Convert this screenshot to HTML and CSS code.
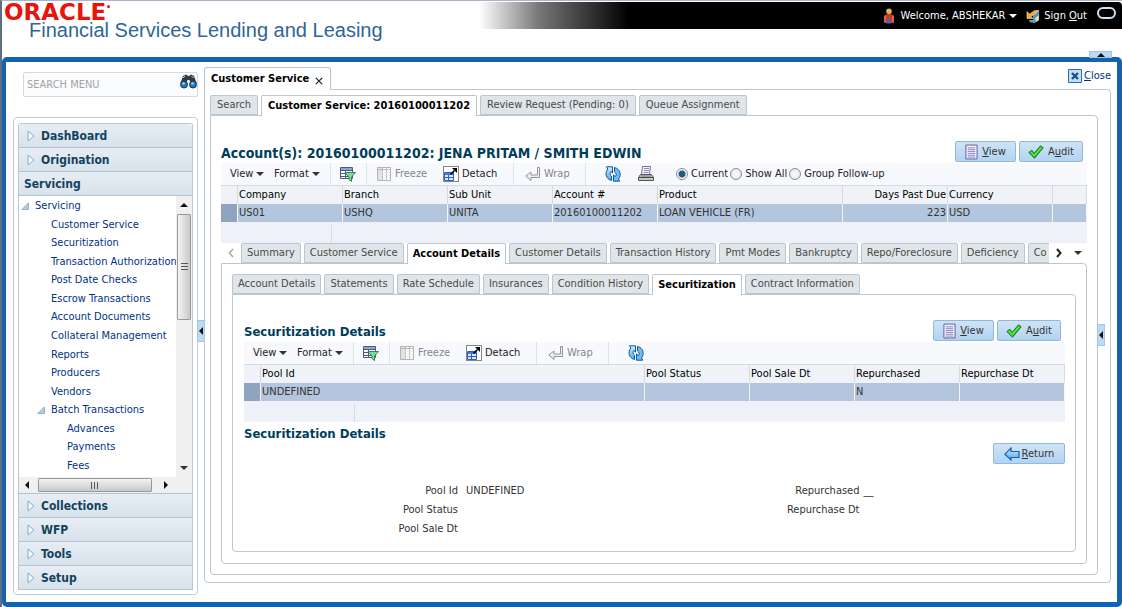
FILE: index.html
```html
<!DOCTYPE html>
<html lang="en">
<head>
<meta charset="utf-8">
<title>Financial Services Lending and Leasing</title>
<link rel="stylesheet" href="styles.css">
</head>
<body>
<svg class="sprite" aria-hidden="true">
  <defs>
    <linearGradient id="g-blue" x1="0" y1="0" x2="0" y2="1"><stop offset="0" stop-color="#d5efff"/><stop offset="1" stop-color="#4aa5ea"/></linearGradient>
    <symbol id="i-filter" viewBox="0 0 16 16">
      <path d="M.5 1.500h12v11H.5z" fill="#fff" stroke="#4b5a78"/><path d="M1 2h11v2H1z" fill="#8fa3d8"/>
      <path d="M0 4.500h12M0 7.500h12M0 10.500h8M5.500 4v8" stroke="#4b5a78"/>
      <path d="M5 6.500h10.500l-4 4.500v4.500l-2.500-2V11z" fill="#7fdc9a" stroke="#2f8a52"/>
    </symbol>
    <symbol id="i-freeze" viewBox="0 0 16 16">
      <path d="M1.500 1.500h13v13h-13z" fill="#fff" stroke="#b4b4b4"/><path d="M2 2h4v12H2z" fill="#e2e2e2"/>
      <path d="M1 3.500h14M6.500 2v13M10.500 2v13" stroke="#b9b9b9"/><path d="M2 6.500h12M2 9.500h12M2 12h12" stroke="#e6e6e6"/>
    </symbol>
    <symbol id="i-detach" viewBox="0 0 16 16">
      <path d="M.5.5h15v15H.5z" fill="#fff" stroke="#111" stroke-dasharray="1 1"/>
      <path d="M1.500 6.500h9v8h-9z" fill="#d7e8ff" stroke="#2c5fc0"/><path d="M2 7h8v2H2z" fill="#3f7be0"/><path d="M2 11.500h8M5.500 9v5" stroke="#2c5fc0"/>
      <path d="M7.500 8.500l4-4" stroke="#000" stroke-width="1.600"/><path d="M9 2h5v5z" fill="#000"/>
    </symbol>
    <symbol id="i-wrap" viewBox="0 0 16 16">
      <path d="M12.500 1.500h2v10H6v3L.8 10 6 6v3h6.500z" fill="#eee" stroke="#949494"/>
    </symbol>
    <symbol id="i-refresh" viewBox="0 0 16 16">
      <path d="M1.500.8H7.500v6.200L5.800 5.500C4.500 7 4.800 8.800 6.500 10v4.500C1 13-.5 7.500 2.800 3z" fill="url(#g-blue)" stroke="#12589f"/>
      <path d="M14.700 15.200H8.500V9l1.900 1.500c1.300-1.500 1-3.300-.9-4.500V1.500c5.800 1.500 7.200 7 4 11.500z" fill="#6bbcf7" stroke="#12589f"/>
    </symbol>
    <symbol id="i-print" viewBox="0 0 16 16">
      <path d="M4.500.5h8l-1 8h-8z" fill="#f5f3ff" stroke="#77729c"/><path d="M6 2.500h5M6 4.500h5M5.500 6.500h5" stroke="#8d86bd"/>
      <path d="M2.500 8.500h11l2 3v3H.5v-3z" fill="#c9c9c9" stroke="#555"/><path d="M1 11.500h14" stroke="#444"/><path d="M3 10h10" stroke="#777"/>
    </symbol>
    <symbol id="i-page" viewBox="0 0 14 16">
      <path d="M1 .5h12v15H1z" fill="#f2efff" stroke="#5b5791"/><path d="M3 3.500h8M3 5.500h8M3 7.500h8M3 9.500h8M3 11.500h8M3 13.500h8" stroke="#8881bc"/>
    </symbol>
    <symbol id="i-check" viewBox="0 0 16 14">
      <path d="M.8 7.500l3-2.300 2.500 3L12.500.8l2.700 2L6.500 13.200z" fill="#2fc52f" stroke="#137a1a"/><path d="M3 7.200l3.200 3.500 7-8.200" fill="none" stroke="#8df084"/>
    </symbol>
    <symbol id="i-back" viewBox="0 0 16 14">
      <path d="M7 1v3.500h8v6H7V13L1 7.200z" fill="url(#g-blue)" stroke="#1560b4" stroke-width="1.200"/>
    </symbol>
    <symbol id="i-tri" viewBox="0 0 8 12"><path d="M1 1L7 6l-6 5z" fill="#f4fbff" stroke="#83a9c6"/></symbol>
    <symbol id="i-open" viewBox="0 0 8 8"><path d="M7.500.8v6.700H.8z" fill="#a9cce3" stroke="#84a8c2" stroke-width=".8"/></symbol>
  </defs>
</svg>

<header class="top">
  <div class="brand">
    <div class="oracle">ORACLE<span class="dot"></span></div>
    <h1 class="product">Financial Services Lending and Leasing</h1>
  </div>
  <nav class="userbar">
    <svg class="ic-user" viewBox="0 0 12 16"><circle cx="6" cy="3.300" r="2.800" fill="#e9b25c"/><path d="M1 15V8.500Q1 6 6 6t5 2.500V15z" fill="#cf3a22"/><path d="M3.500 11h5v4.500h-5z" fill="#4a63b5"/><path d="M2 8v6M10 8v6" stroke="#f08a5c"/></svg>
    <button class="user" type="button">Welcome, ABSHEKAR <i class="down light"></i></button>
    <svg class="ic-out" viewBox="0 0 14 14"><path d="M7 2h6v9l-4 3H7z" fill="#4b90cf"/><path d="M9 9l4-3v5l-3 2z" fill="#e6dca0"/><path d="M1 2.500v7h6L5 7.500 10.500 4 13 1.500H9L3.500 5z" fill="#f2a437" stroke="#ffe08a" stroke-width=".6"/><path d="M3 11h5v2.500H4z" fill="#5b9fd8"/></svg>
    <a class="signout" href="#">Sign <u>O</u>ut</a>
    <span class="ring"></span>
  </nav>
</header>

<div class="frame">
  <button class="handle handle-top" type="button" aria-label="Collapse header"><i class="up"></i></button>
  <aside class="side">
    <div class="search">
      <input type="text" placeholder="SEARCH MENU" aria-label="Search menu">
      <button type="button" aria-label="Find"><svg viewBox="0 0 17 15"><path d="M3 2l3-1.500L8 2h1l2-1.500L14 2l2.500 7h-6L9.500 6h-2l-1 3H.5z" fill="#333a42"/><path d="M3 4l2-2M11.500 2l2 2" stroke="#c6d0d8"/><circle cx="4" cy="10.500" r="3.500" fill="#1878c8" stroke="#20354a"/><circle cx="13" cy="10.500" r="3.500" fill="#1878c8" stroke="#20354a"/><circle cx="3.500" cy="9.500" r="1.300" fill="#8cd0ff"/><circle cx="12.500" cy="9.500" r="1.300" fill="#8cd0ff"/></svg></button>
    </div>
    <div class="menu-box">
      <div class="accordion">
        <button class="acc" type="button"><svg><use href="#i-tri"/></svg>DashBoard</button>
        <button class="acc" type="button"><svg><use href="#i-tri"/></svg>Origination</button>
        <button class="acc open" type="button">Servicing</button>
        <div class="tree-wrap">
          <ul class="tree">
            <li class="l0"><svg><use href="#i-open"/></svg><a href="#">Servicing</a></li>
            <li class="l1"><a href="#">Customer Service</a></li>
            <li class="l1"><a href="#">Securitization</a></li>
            <li class="l1"><a href="#">Transaction Authorization</a></li>
            <li class="l1"><a href="#">Post Date Checks</a></li>
            <li class="l1"><a href="#">Escrow Transactions</a></li>
            <li class="l1"><a href="#">Account Documents</a></li>
            <li class="l1"><a href="#">Collateral Management</a></li>
            <li class="l1"><a href="#">Reports</a></li>
            <li class="l1"><a href="#">Producers</a></li>
            <li class="l1"><a href="#">Vendors</a></li>
            <li class="l1 branch"><svg><use href="#i-open"/></svg><a href="#">Batch Transactions</a></li>
            <li class="l2"><a href="#">Advances</a></li>
            <li class="l2"><a href="#">Payments</a></li>
            <li class="l2"><a href="#">Fees</a></li>
          </ul>
          <div class="vbar"><i class="up"></i><span class="thumb"><b></b></span><i class="down"></i></div>
          <div class="hbar"><i class="left"></i><span class="thumb"><b></b></span><i class="right"></i></div>
        </div>
        <button class="acc" type="button"><svg><use href="#i-tri"/></svg>Collections</button>
        <button class="acc" type="button"><svg><use href="#i-tri"/></svg>WFP</button>
        <button class="acc" type="button"><svg><use href="#i-tri"/></svg>Tools</button>
        <button class="acc" type="button"><svg><use href="#i-tri"/></svg>Setup</button>
      </div>
    </div>
    <button class="handle handle-left" type="button" aria-label="Collapse menu"><i class="left"></i></button>
  </aside>

  <main class="main">
    <button class="handle handle-right" type="button" aria-label="Expand side panel"><i class="left"></i></button>
    <div class="main-head">
      <div class="page-tab">Customer Service <button type="button" aria-label="Close tab"><svg viewBox="0 0 8 8"><path d="M.8.8l6.400 6.400M7.200.8L.8 7.200" stroke="#222" stroke-width="1.200"/></svg></button></div>
      <a class="close" href="#"><svg viewBox="0 0 14 14"><path d="M.5.5h13v13H.5z" fill="#bfe0f7" stroke="#2d6da6"/><path d="M4 4l6 6M10 4l-6 6" stroke="#1d5186" stroke-width="2.400"/></svg><span><u>C</u>lose</span></a>
    </div>
    <div class="panel p1">
      <div class="tabs">
        <button type="button">Search</button>
        <button type="button" class="on">Customer Service: 20160100011202</button>
        <button type="button">Review Request (Pending: 0)</button>
        <button type="button">Queue Assignment</button>
      </div>
      <div class="panel p2">
        <div class="title-row">
          <h2 class="account">Account(s): 20160100011202: JENA PRITAM / SMITH EDWIN</h2>
          <div class="actions">
            <button class="btn view" type="button"><svg class="page"><use href="#i-page"/></svg><span><u>V</u>iew</span></button>
            <button class="btn" type="button"><svg class="check"><use href="#i-check"/></svg><span>A<u>u</u>dit</span></button>
          </div>
        </div>
        <div class="toolbar">
          <button class="t-view" type="button">View <i class="down"></i></button>
          <button class="t-format" type="button">Format <i class="down"></i></button>
          <button class="t-filter" type="button" aria-label="Query by example"><svg><use href="#i-filter"/></svg></button>
          <button class="t-freeze" type="button" disabled><svg><use href="#i-freeze"/></svg>Freeze</button>
          <button class="t-detach" type="button"><svg><use href="#i-detach"/></svg>Detach</button>
          <button class="t-wrap" type="button" disabled><svg><use href="#i-wrap"/></svg>Wrap</button>
          <button class="t-refresh" type="button" aria-label="Refresh"><svg><use href="#i-refresh"/></svg></button>
          <button class="t-print" type="button" aria-label="Print"><svg><use href="#i-print"/></svg></button>
          <div class="radios">
            <label><input type="radio" name="scope" checked>Current</label>
            <label><input type="radio" name="scope">Show All</label>
            <label><input type="radio" name="scope">Group Follow-up</label>
          </div>
        </div>
        <table class="grid">
          <colgroup><col class="c-sel"><col class="c-std"><col class="c-std"><col class="c-std"><col class="c-std"><col class="c-product"><col class="c-std"><col class="c-std"><col></colgroup>
          <thead><tr><th></th><th>Company</th><th>Branch</th><th>Sub Unit</th><th>Account #</th><th>Product</th><th class="num">Days Past Due</th><th>Currency</th><th></th></tr></thead>
          <tbody><tr><td></td><td>US01</td><td>USHQ</td><td>UNITA</td><td>20160100011202</td><td>LOAN VEHICLE (FR)</td><td class="num">223</td><td>USD</td><td></td></tr></tbody>
        </table>
        <div class="grid-foot"></div>

        <div class="tab-strip">
          <button class="arrow" type="button" aria-label="Previous tabs"><svg viewBox="0 0 6 10"><path d="M5 1L1.500 5 5 9" fill="none" stroke="#aaa" stroke-width="1.600"/></svg></button>
          <div class="tabs">
            <button type="button">Summary</button>
            <button type="button">Customer Service</button>
            <button type="button" class="on">Account Details</button>
            <button type="button">Customer Details</button>
            <button type="button">Transaction History</button>
            <button type="button">Pmt Modes</button>
            <button type="button">Bankruptcy</button>
            <button type="button">Repo/Foreclosure</button>
            <button type="button">Deficiency</button>
            <button type="button" class="partial">Co</button>
          </div>
          <div class="more">
            <button class="arrow" type="button" aria-label="Next tabs"><svg viewBox="0 0 6 10"><path d="M1 1l3.500 4L1 9" fill="none" stroke="#222" stroke-width="2"/></svg></button>
            <button class="arrow" type="button" aria-label="All tabs"><i class="down"></i></button>
          </div>
        </div>
        <div class="panel p3">
          <div class="tabs">
            <button type="button">Account Details</button>
            <button type="button">Statements</button>
            <button type="button">Rate Schedule</button>
            <button type="button">Insurances</button>
            <button type="button">Condition History</button>
            <button type="button" class="on">Securitization</button>
            <button type="button">Contract Information</button>
          </div>
          <div class="panel p4">
            <div class="title-row">
              <h2>Securitization Details</h2>
              <div class="actions">
                <button class="btn view" type="button"><svg class="page"><use href="#i-page"/></svg><span><u>V</u>iew</span></button>
                <button class="btn" type="button"><svg class="check"><use href="#i-check"/></svg><span>A<u>u</u>dit</span></button>
              </div>
            </div>
            <div class="toolbar">
              <button class="t-view" type="button">View <i class="down"></i></button>
              <button class="t-format" type="button">Format <i class="down"></i></button>
              <button class="t-filter" type="button" aria-label="Query by example"><svg><use href="#i-filter"/></svg></button>
              <button class="t-freeze" type="button" disabled><svg><use href="#i-freeze"/></svg>Freeze</button>
              <button class="t-detach" type="button"><svg><use href="#i-detach"/></svg>Detach</button>
              <button class="t-wrap" type="button" disabled><svg><use href="#i-wrap"/></svg>Wrap</button>
              <button class="t-refresh" type="button" aria-label="Refresh"><svg><use href="#i-refresh"/></svg></button>
            </div>
            <table class="grid">
              <colgroup><col class="c-sel"><col><col class="c-std"><col class="c-std"><col class="c-std"><col class="c-std"></colgroup>
              <thead><tr><th></th><th>Pool Id</th><th>Pool Status</th><th>Pool Sale Dt</th><th>Repurchased</th><th>Repurchase Dt</th></tr></thead>
              <tbody><tr><td></td><td>UNDEFINED</td><td></td><td></td><td>N</td><td></td></tr></tbody>
            </table>
            <div class="grid-foot"></div>
            <h2>Securitization Details</h2>
            <div class="actions end">
              <button class="btn return" type="button"><svg class="check"><use href="#i-back"/></svg><span><u>R</u>eturn</span></button>
            </div>
            <div class="details">
              <dl>
                <dt>Pool Id</dt><dd>UNDEFINED</dd>
                <dt>Pool Status</dt><dd></dd>
                <dt>Pool Sale Dt</dt><dd></dd>
              </dl>
              <dl>
                <dt>Repurchased</dt><dd>__</dd>
                <dt>Repurchase Dt</dt><dd></dd>
              </dl>
            </div>
          </div>
        </div>
      </div>
    </div>
  </main>
</div>
</body>
</html>
```
FILE: styles.css
```css
* { box-sizing: border-box; }
body {
  margin: 0;
  min-height: 100vh;
  display: flex;
  flex-direction: column;
  border-top: 1px solid #aab3cb;
  border-left: 2px solid #5b6f86;
  background: #fff;
  color: #333;
  font: 11px/14px "DejaVu Sans Condensed", "Noto Sans", sans-serif;
}
button, input { font: inherit; color: inherit; }
button { margin: 0; padding: 0; border: 0; background: none; white-space: nowrap; }
a { color: #003286; text-decoration: none; }
h1, h2, ul, dl, dd { margin: 0; padding: 0; font-weight: normal; }
.sprite { position: absolute; width: 0; height: 0; }

/* arrows */
i.down, i.up, i.left, i.right { display: inline-block; flex: none; border: 4px solid transparent; }
i.down { border-top-color: #333; border-bottom: 0; }
i.up { border-bottom-color: #111; border-top: 0; }
i.left { border-right-color: #111; border-left: 0; }
i.right { border-left-color: #111; border-right: 0; }
i.light { border-top-color: #fff; }

/* header */
.top { display: flex; height: 56px; }
.brand { flex: none; padding: 2px 0 0 2px; }
.oracle { display: flex; align-items: flex-start; color: #e8140c; font: bold 23px/18px "DejaVu Sans", sans-serif; }
.dot { width: 3px; height: 3px; margin: 2px 0 0 1px; border-radius: 50%; background: #e8140c; }
.product { padding-left: 25px; color: #2f6599; font: 20px/18px "Liberation Sans", Arial, sans-serif; white-space: nowrap; }
.userbar {
  flex: 1;
  display: flex;
  align-items: center;
  justify-content: flex-end;
  height: 27px;
  margin: 1px 0 0 96px;
  padding-right: 6px;
  color: #fff;
  background: linear-gradient(90deg, #fff 0, #777 60px, #000 150px);
  border-top-right-radius: 4px;
}
.ic-user { width: 12px; height: 16px; margin-right: 6px; }
.user { display: flex; align-items: center; gap: 4px; margin-right: 9px; }
.ic-out { width: 14px; height: 14px; margin-right: 4px; }
.signout { color: #fff; }
.ring { width: 19px; height: 12px; margin: 0 0 5px 10px; border: 2px solid #cfe0f5; border-radius: 6px; }

/* frame */
.frame {
  position: relative;
  flex: 1;
  display: flex;
  gap: 6px;
  padding: 5px 6px 7px 7px;
  border: 5px solid #1762ae;
  border-left-width: 4px;
  border-radius: 5px;
}
.handle {
  position: absolute;
  z-index: 2;
  display: flex;
  align-items: center;
  justify-content: center;
  width: 8px;
  height: 22px;
  background: #bcdaf3;
  border: 1px solid #a3c6e6;
}
.handle-top { top: -11px; right: 5px; width: 23px; height: 7px; }
.handle-left { top: 253px; right: -7px; }
.handle-right { top: 257px; right: 6px; }

/* side menu */
.side { position: relative; flex: none; width: 185px; display: flex; flex-direction: column; gap: 20px; padding-top: 5px; }
.search { display: flex; height: 25px; margin-left: 10px; border: 1px solid #cfdae3; border-radius: 2px; background: #fafcfe; }
.search input { flex: 1; min-width: 0; padding: 0 3px; border: 0; background: none; }
.search input::placeholder { color: #a3a3a3; opacity: 1; }
.search svg { display: block; width: 17px; height: 15px; margin-bottom: 7px; }
.menu-box { flex: 1; padding: 5px 4px 4px; border: 1px solid #c3ccd6; border-radius: 4px; }
.accordion { border: 1px solid #b9c6d3; border-bottom: 0; border-radius: 3px 3px 0 0; }
.acc {
  display: flex;
  align-items: center;
  gap: 6px;
  width: 100%;
  height: 24px;
  padding-left: 8px;
  border-bottom: 1px solid #b4c3d1;
  background: linear-gradient(#e7edf3, #d8e2ec);
  color: #12435f;
  font-size: 12px;
  font-weight: bold;
}
.acc.open { padding-left: 5px; }
.acc svg { width: 8px; height: 12px; }
.tree-wrap { display: grid; grid-template: 281px 16px / 1fr 16px; border-bottom: 1px solid #b4c3d1; }
.tree { display: grid; grid-auto-rows: 1fr; min-width: 0; padding: 1px 0 2px; list-style: none; white-space: nowrap; }
.tree li { display: flex; align-items: center; gap: 6px; }
.tree svg { width: 8px; height: 8px; }
.l0 { padding-left: 2px; }
.l1 { padding-left: 32px; }
.l1.branch { padding-left: 18px; }
.l2 { padding-left: 48px; }
.vbar, .hbar { display: flex; align-items: center; background: #f0f0f0; }
.vbar { flex-direction: column; padding: 7px 0; }
.vbar .down { margin-top: auto; }
.thumb { display: flex; align-items: center; justify-content: center; border: 1px solid #999; border-radius: 1px; }
.vbar .thumb { width: 14px; height: 106px; margin-top: 7px; background: linear-gradient(90deg, #f3f3f3, #c9c9c9); }
.hbar { grid-column: 1 / 3; padding: 0 24px 0 6px; }
.hbar .thumb { flex: 1; height: 14px; margin: 0 12px 0 9px; background: linear-gradient(#f3f3f3, #c9c9c9); }
.thumb b { width: 7px; height: 8px; background: repeating-linear-gradient(#555 0 1px, transparent 1px 3px); }
.hbar .thumb b { width: 8px; height: 7px; background: repeating-linear-gradient(90deg, #555 0 1px, transparent 1px 3px); }

/* work area */
.main { position: relative; flex: 1; min-width: 0; display: flex; flex-direction: column; padding-bottom: 12px; }
.main-head { display: flex; justify-content: space-between; height: 22px; }
.page-tab {
  position: relative;
  z-index: 1;
  display: flex;
  align-items: center;
  gap: 6px;
  height: 23px;
  padding: 0 7px 0 6px;
  border: 1px solid #b7c4cf;
  border-bottom: 0;
  border-radius: 3px 3px 0 0;
  background: #fff;
  color: #000;
  font-weight: bold;
}
.page-tab svg { display: block; width: 8px; height: 8px; margin-top: 4px; }
.close { display: flex; align-items: center; gap: 2px; height: 18px; }
.close svg { width: 14px; height: 14px; }
.panel { border: 1px solid #bcc6cf; border-radius: 0 4px 4px 4px; background: #fff; }
.p1 { flex: 1; padding: 5px 12px 6px 5px; }
.p2 { padding: 25px 10px 10px; }
.p3 { padding: 10px 10px 11px; }
.p4 { padding: 25px 10px 13px 11px; }

.tabs { position: relative; display: flex; gap: 3px; height: 21px; margin-bottom: -1px; }
.tabs button {
  flex: none;
  height: 20px;
  padding: 0 5px;
  border: 1px solid #bac7cf;
  border-radius: 2px 2px 0 0;
  background: #dfe5e8;
  color: #4a4a4a;
}
.tabs .on { height: 21px; border-bottom: 0; background: #fff; color: #000; font-weight: bold; }
.p1 > .tabs button { padding: 0 6px; }
.tabs .partial { flex: 1; padding-right: 0; border-right: 0; border-top-right-radius: 0; text-align: left; }
.tab-strip { display: flex; }
.tab-strip .tabs { flex: 1; min-width: 0; overflow: hidden; }
.arrow { display: flex; align-items: center; justify-content: center; width: 20px; height: 20px; }
.arrow svg { width: 6px; height: 10px; }
.more { display: flex; flex: none; }
.more .arrow { width: 19px; }

.title-row { display: flex; justify-content: space-between; height: 22px; }
h2 { padding-top: 4px; color: #003d5b; font-size: 13px; line-height: 16px; font-weight: bold; white-space: nowrap; }
h2.account { font-size: 14px; }
.actions { display: flex; justify-content: flex-end; gap: 3px; margin-right: 4px; }
.actions.end { margin: 1px 0 0; }
.btn {
  display: flex;
  align-items: center;
  justify-content: center;
  gap: 4px;
  height: 21px;
  min-width: 64px;
  padding: 0 7px;
  border: 1px solid #92b9dc;
  border-radius: 2px;
  background: linear-gradient(#cfe3f6, #b3d3f1);
}
.btn.view { min-width: 61px; }
.btn.return { gap: 2px; min-width: 72px; }
.btn svg.page { width: 13px; height: 16px; }
.btn svg.check { width: 16px; height: 14px; }

.toolbar { display: flex; align-items: center; height: 22px; padding-left: 9px; background: #f8f9fc; color: #222; }
.toolbar button { display: flex; align-items: center; gap: 3px; height: 22px; flex: none; }
.toolbar button:disabled { color: #84868c; }
.toolbar svg { width: 16px; height: 16px; }
.toolbar .t-view { width: 44px; }
.toolbar .t-format { width: 57px; border-right: 1px solid #dde3ea; }
.toolbar .t-filter { width: 36px; padding-left: 9px; border-right: 1px solid #dde3ea; }
.toolbar .t-freeze { width: 76px; padding-left: 9px; }
.toolbar .t-detach { width: 71px; border-right: 1px solid #dde3ea; }
.toolbar .t-wrap { width: 72px; padding-left: 11px; border-right: 1px solid #dde3ea; }
.toolbar .t-refresh { width: 52px; padding-left: 19px; }
.toolbar .t-print { width: 38px; }
.radios { display: flex; gap: 2px; }
.radios label { display: flex; align-items: center; gap: 3px; white-space: nowrap; }
.radios input {
  appearance: none;
  width: 12px;
  height: 12px;
  margin: 0;
  border: 1px solid #8a8f94;
  border-radius: 50%;
  background: radial-gradient(#fff, #dcdcdc);
}
.radios input:checked { background: radial-gradient(#1c5f80 0 3px, #f4f4f4 4px); }

.grid { width: 100%; table-layout: fixed; border-collapse: separate; border-spacing: 0; border-top: 1px solid #d5dbe3; }
.c-sel { width: 17px; }
.c-std { width: 105px; }
.c-product { width: 185px; }
.grid th, .grid td { height: 18px; padding: 0 1px; overflow: hidden; text-align: left; font-weight: normal; white-space: nowrap; }
.grid th { background: #eff3f8; color: #000; border-right: 1px solid #d3dbe6; }
.grid td { background: #b3c6dd; border-right: 1px solid #f4f7fa; color: #333; }
.grid td:first-child { background: #8fa4bf; }
.grid .num { text-align: right; }
.grid-foot { height: 21px; background: linear-gradient(90deg, transparent 110px, #d5dbe6 110px 111px, transparent 111px) no-repeat 0 3px #eef2f8; }
.details { display: grid; grid-template-columns: 1fr 1fr; padding-top: 17px; }
.details dl { display: grid; grid-template-columns: 214px 1fr; grid-auto-rows: 19px; align-content: start; column-gap: 8px; align-items: center; }
.details dl + dl { grid-template-columns: 205px 1fr; column-gap: 4px; }
.details dt { text-align: right; }
```
